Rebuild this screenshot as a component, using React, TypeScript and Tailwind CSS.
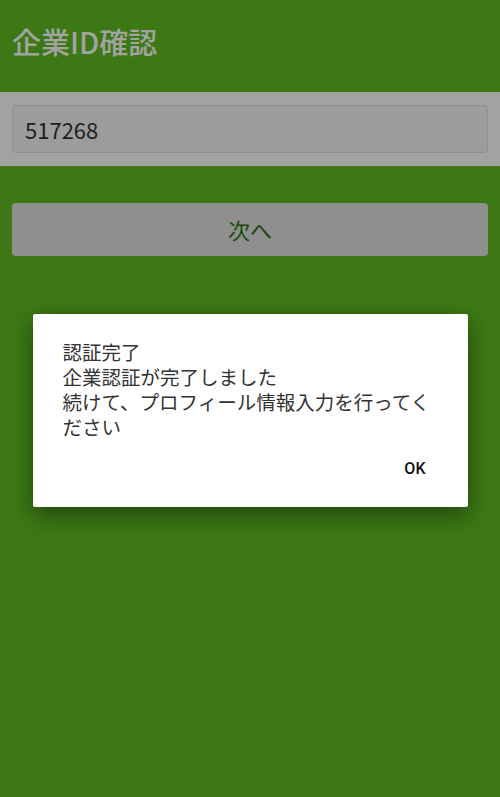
export default function App() {
  return (
    <div
      className="relative h-[797px] w-full overflow-hidden bg-[#3c7914]"
      style={{ fontFamily: "'Noto Sans CJK JP', Roboto, sans-serif" }}
    >
      {/* Header */}
      <div className="flex h-[92px] items-center px-3 pb-[8px]">
        <h1 className="text-[29px] font-medium text-[#a3a3a3]">企業ID確認</h1>
      </div>

      {/* Input band */}
      <div className="bg-[#a2a2a2] px-3 py-[13px]">
        <div className="flex h-[48px] items-center rounded-[4px] border border-[#8e8e8e] bg-[#9c9c9c] px-3">
          <span className="text-[22px] text-[#1f1f1f]">517268</span>
        </div>
      </div>

      {/* Next button */}
      <div className="px-3 pt-[37px]">
        <button className="flex h-[53px] w-full items-center justify-center rounded-[4px] bg-[#8f8f8f] text-[22px] text-[#1c480b]">
          次へ
        </button>
      </div>

      {/* Dialog */}
      <div className="absolute inset-0 flex items-start justify-center pt-[314px]">
        <div className="w-[435px] rounded-[2px] bg-white pl-[30px] pr-[30px] pt-[25px] pb-[26px] shadow-[0_8px_24px_rgba(0,0,0,0.45)]">
          <p className="text-[19.5px] leading-[25px] text-[#333]">
            認証完了
            <br />
            企業認証が完了しました
            <br />
            続けて、プロフィール情報入力を行ってください
          </p>
          <div className="mt-[18px] flex justify-end pr-[12px]">
            <span
              className="text-[16px] leading-[24px] text-[#111]"
              style={{ fontFamily: "Roboto, sans-serif", fontWeight: 500 }}
            >
              OK
            </span>
          </div>
        </div>
      </div>
    </div>
  );
}
